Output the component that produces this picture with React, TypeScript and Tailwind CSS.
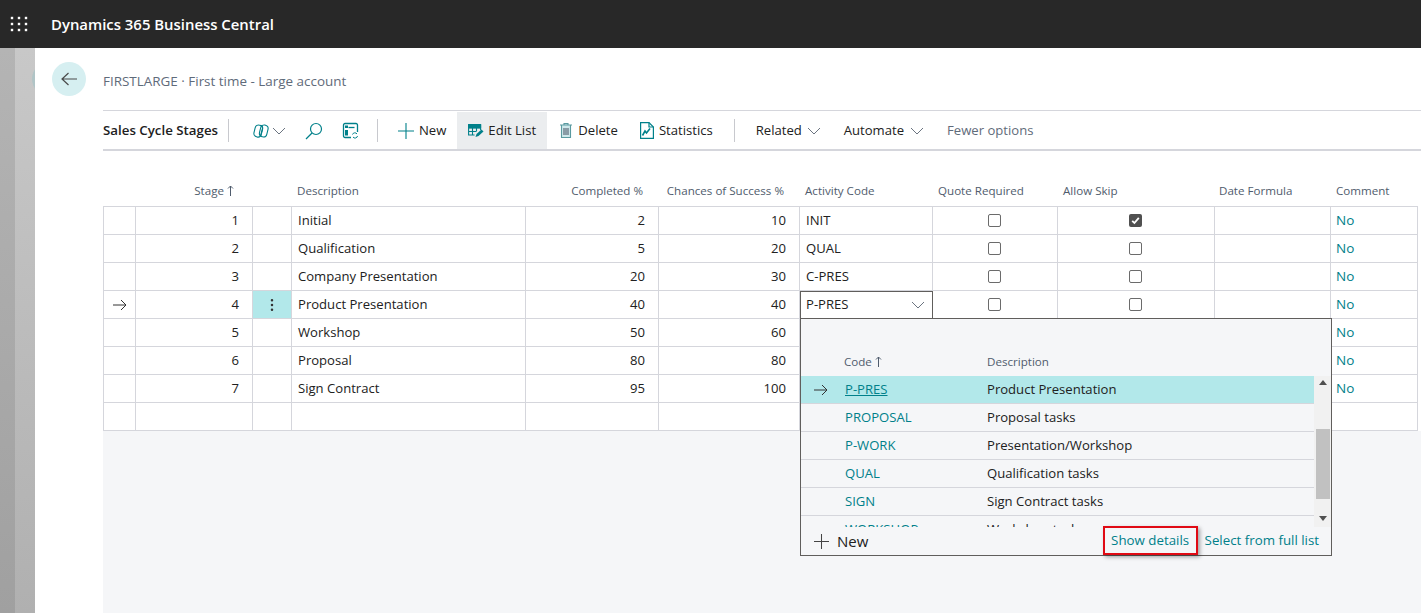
import React from 'react';
import { EllipsisVertical } from 'lucide-react';

const font = "font-['Open_Sans','Noto_Sans',sans-serif]";

const columns =
  'grid grid-cols-[32px_117px_39px_234px_133px_141px_133px_125px_157px_116px_87px]';

const stages = [
  { no: 1, desc: 'Initial', done: 2, chance: 10, code: 'INIT', skip: true },
  { no: 2, desc: 'Qualification', done: 5, chance: 20, code: 'QUAL' },
  { no: 3, desc: 'Company Presentation', done: 20, chance: 30, code: 'C-PRES' },
  { no: 4, desc: 'Product Presentation', done: 40, chance: 40, code: 'P-PRES', current: true },
  { no: 5, desc: 'Workshop', done: 50, chance: 60, code: '' },
  { no: 6, desc: 'Proposal', done: 80, chance: 80, code: '' },
  { no: 7, desc: 'Sign Contract', done: 95, chance: 100, code: '' },
];

const activities = [
  { code: 'P-PRES', desc: 'Product Presentation', current: true },
  { code: 'PROPOSAL', desc: 'Proposal tasks' },
  { code: 'P-WORK', desc: 'Presentation/Workshop' },
  { code: 'QUAL', desc: 'Qualification tasks' },
  { code: 'SIGN', desc: 'Sign Contract tasks' },
  { code: 'WORKSHOP', desc: 'Workshop tasks' },
];

const Cell: React.FC<{ className?: string; children?: React.ReactNode }> = ({ className = '', children }) => (
  <div className={`h-[28px] border-r border-b border-[#d5d6dc] bg-white flex items-center ${className}`}>
    {children}
  </div>
);

const CheckBox: React.FC<{ checked?: boolean }> = ({ checked }) =>
  checked ? (
    <span className="w-[13px] h-[13px] rounded-[2px] bg-[#505050] flex items-center justify-center">
      <svg width="9" height="9" viewBox="0 0 9 9" fill="none" stroke="#fff" strokeWidth="1.8">
        <path d="M1.2 4.8 3.4 7 7.8 1.8" />
      </svg>
    </span>
  ) : (
    <span className="w-[13px] h-[13px] rounded-[2px] border border-[#6b6b6b] bg-white" />
  );

const Chevron: React.FC<{ className?: string }> = ({ className = '' }) => (
  <svg width="14" height="8" viewBox="0 0 14 8" fill="none" stroke="#6b7480" strokeWidth="1" className={className}>
    <path d="M1 1l6 6 6-6" />
  </svg>
);

const PlusIcon: React.FC<{ size: number; color: string; className?: string }> = ({ size, color, className = '' }) => (
  <svg width={size} height={size} viewBox="0 0 16 16" fill="none" stroke={color} strokeWidth="1.1" className={className}>
    <path d="M8 0v16M0 8h16" />
  </svg>
);

const ArrowRightIcon: React.FC = () => (
  <svg width="14" height="12" viewBox="0 0 14 12" fill="none" stroke="#333" strokeWidth="1">
    <path d="M0 6h13M8 1l5 5-5 5" />
  </svg>
);

const SortUp: React.FC = () => (
  <svg width="7" height="11" viewBox="0 0 7 11" fill="none" stroke="#505c6d" strokeWidth="1" className="ml-[3px]">
    <path d="M3.500 11V1M1 3.500l2.500-2.500L6 3.500" />
  </svg>
);

const Divider: React.FC<{ className?: string }> = ({ className = '' }) => (
  <span className={`w-px h-[23px] shrink-0 bg-[#c8c9ce] ${className}`} />
);

const Toolbar: React.FC = () => (
  <div className="h-[41px] shrink-0 pt-[1px] border-t border-b-2 border-[#d5d6dc] flex items-center text-[13.1px] text-[#212121] whitespace-nowrap">
    <span className="font-semibold text-[13.3px] w-[125px]">Sales Cycle Stages</span>
    <Divider />
    <svg width="18" height="16" viewBox="0 0 18 16" fill="none" stroke="#00808a" strokeWidth="1.1" className="ml-[23px]">
      <rect x="2.500" y="2" width="7.500" height="12" rx="3.500" transform="rotate(14 6 8)" />
      <rect x="8" y="2" width="7.500" height="12" rx="3.500" transform="rotate(14 12 8)" />
      <path d="M8 2.500c2 0 3 1 2.500 3L8.500 13" />
    </svg>
    <Chevron className="ml-[2px]" />
    <svg width="18" height="18" viewBox="0 0 18 18" fill="none" stroke="#00808a" strokeWidth="1.2" className="ml-[19px]">
      <circle cx="11" cy="7" r="5.500" />
      <path d="M7 11 1 17" />
    </svg>
    <svg width="17" height="17" viewBox="0 0 17 17" fill="none" stroke="#00808a" strokeWidth="1.300" className="ml-[19px]">
      <path d="M9 15.500H3a1.500 1.500 0 0 1-1.500-1.500V3A1.500 1.500 0 0 1 3 1.500h11A1.500 1.500 0 0 1 15.500 3v7" />
      <path d="M6.500 5.500h6" />
      <rect x="3" y="3.500" width="3" height="2.500" fill="#00808a" stroke="none" />
      <rect x="3" y="8" width="3" height="5.500" fill="#00808a" stroke="none" />
      <path d="M10.500 12.500a2.500 2.500 0 0 1 4.500-.5M15.500 14a2.500 2.500 0 0 1-4.500 1" strokeWidth="1" />
    </svg>
    <Divider className="ml-[18px]" />
    <PlusIcon size={16} color="#00808a" className="ml-[20px]" />
    <span className="ml-[5px]">New</span>
    <div className="ml-[11px] h-full w-[90px] shrink-0 bg-[#ebedef] flex items-center pl-[11px]">
      <svg width="16" height="14" viewBox="0 0 16 14" fill="none" stroke="#00808a" strokeWidth="1.100">
        <path d="M.6 1h12v5M.6 1v10h6M.6 4h12M.6 7.500h8M4.500 1v10M8.500 1v6" />
        <path d="M.6.6h12v3H.6z" fill="#00808a" />
        <path d="M7.500 13l1-3 5-4.500 2 2-5 4.500z" fill="#00808a" stroke="none" />
      </svg>
      <span className="ml-[4px]">Edit List</span>
    </div>
    <svg width="14" height="17" viewBox="0 0 14 17" fill="none" stroke="#5a9aa0" strokeWidth="1.100" className="ml-[12px]">
      <path d="M1 3h12M5 3V1.500h4V3M2.500 3v12.500h9V3" fill="#cfe9ec" />
      <path d="M5 6v7M7 6v7M9 6v7" stroke="#505c6d" />
    </svg>
    <span className="ml-[5px]">Delete</span>
    <svg width="14" height="17" viewBox="0 0 14 17" fill="none" stroke="#00808a" strokeWidth="1.200" className="ml-[22px]">
      <path d="M.6 16.400V.6h8.400l4.400 4.400v11.400z" />
      <path d="M9 .6V5h4.400" />
      <path d="M2.500 13.500 5 9l1.500 2L10 6.500" strokeWidth="1.600" />
    </svg>
    <span className="ml-[5px]">Statistics</span>
    <Divider className="ml-[21px]" />
    <span className="ml-[21px]">Related</span>
    <Chevron className="ml-[5px]" />
    <span className="ml-[23px]">Automate</span>
    <Chevron className="ml-[6px]" />
    <span className="ml-[23px] text-[#5f6b7a]">Fewer options</span>
  </div>
);

const LookupPopup: React.FC = () => (
  <div className="absolute left-[697px] top-[167px] w-[532px] h-[238px] border border-[#605e5c] bg-[#f5f6f8] flex flex-col z-10 text-[13.1px]">
    <div className="h-[57px] shrink-0 flex items-end pb-[6px] text-[11.6px] text-[#505c6d]">
      <span className="ml-[43px] w-[143px] flex items-center">
        Code
        <SortUp />
      </span>
      <span>Description</span>
    </div>
    <div className="h-[151px] shrink-0 flex overflow-hidden">
      <div className="w-[513px] shrink-0">
        {activities.map((a) => (
          <div
            key={a.code}
            className={`h-[28px] flex items-center border-b border-[#d5d6dc] ${a.current ? 'bg-[#b2e8ea]' : ''}`}
          >
            <span className="w-[44px] pl-[13px] flex">
              {a.current && <ArrowRightIcon />}
            </span>
            <span className={`w-[142px] text-[#00808a] ${a.current ? 'underline' : ''}`}>{a.code}</span>
            <span className="text-[#212121]">{a.desc}</span>
          </div>
        ))}
      </div>
      <div className="w-[17px] bg-[#f1f1f1] flex flex-col items-center">
        <span className="mt-[4px] w-0 h-0 border-x-[4px] border-x-transparent border-b-[5px] border-b-[#505050]" />
        <span className="mt-[44px] w-[14px] h-[70px] bg-[#c1c1c1]" />
        <span className="mt-auto mb-[6px] w-0 h-0 border-x-[4px] border-x-transparent border-t-[5px] border-t-[#505050]" />
      </div>
    </div>
    <div className="flex-1 flex items-center pl-[13px] text-[#00808a]">
      <PlusIcon size={15} color="#444" />
      <span className="ml-[8px] text-[#212121] text-[15px]">New</span>
      <span className="ml-auto h-[29px] -mt-[1px] w-[95px] border-2 border-[#e00a14] shadow-[2px_2px_4px_rgba(0,0,0,0.35)] flex items-center justify-center text-[13.3px] whitespace-nowrap">
        Show details
      </span>
      <span className="ml-[7px] mr-[12px] text-[13.3px] whitespace-nowrap">Select from full list</span>
    </div>
  </div>
);

export default function App() {
  return (
    <div className={`h-screen overflow-hidden flex flex-col bg-white ${font}`}>
      <header className="h-[48px] shrink-0 bg-[#282828] flex items-center text-white">
        <svg width="18" height="16" viewBox="0 0 18 16" fill="#fff" className="ml-[10px]">
          {[2, 8, 14].map((y) =>
            [2, 9, 16].map((x) => <rect key={`${x}-${y}`} x={x - 1.2} y={y - 1.2} width="2.400" height="2.400" />)
          )}
        </svg>
        <span className="ml-[23px] text-[14.9px] font-semibold whitespace-nowrap">Dynamics 365 Business Central</span>
      </header>

      <div className="flex-1 flex min-h-0">
        <div className="w-[15px] shrink-0 bg-gradient-to-b from-[#b4b4b4] to-[#a0a0a0]" />
        <div className="relative w-[20px] shrink-0 overflow-hidden bg-gradient-to-b from-[#c8c8c8] to-[#b0b0b0]">
          <span className="absolute left-[17px] top-[14px] w-[34px] h-[34px] rounded-full bg-[#b0c4c6]" />
        </div>

        <main className="flex-1 min-w-0 bg-white flex">
          <div className="w-[68px] shrink-0 pt-[14px] pl-[17px]">
            <div className="w-[34px] h-[34px] rounded-full bg-[#d6eff1] flex items-center justify-center">
              <svg width="16" height="14" viewBox="0 0 16 14" fill="none" stroke="#4a4a4a" strokeWidth="1.200">
                <path d="M16 7H1M7.500 1 1 7l6.500 6" />
              </svg>
            </div>
          </div>

          <div className="flex-1 min-w-0 flex flex-col">
            <div className="h-[62px] shrink-0 pt-[24px] text-[13.45px] leading-[18px] text-[#5f6b7a] whitespace-nowrap">
              FIRSTLARGE · First time - Large account
            </div>
            <Toolbar />

            <div className="relative flex-1 flex flex-col min-h-0">
              <div className={`${columns} h-[55px] shrink-0 items-end pb-[7px] text-[11.6px] text-[#505c6d] whitespace-nowrap`}>
                <span />
                <span className="flex justify-end items-center pr-[18px]">
                  Stage
                  <SortUp />
                </span>
                <span />
                <span className="pl-[6px]">Description</span>
                <span className="text-right pr-[15px]">Completed %</span>
                <span className="text-right pr-[15px]">Chances of Success %</span>
                <span className="pl-[6px]">Activity Code</span>
                <span className="pl-[6px]">Quote Required</span>
                <span className="pl-[6px]">Allow Skip</span>
                <span className="pl-[5px]">Date Formula</span>
                <span className="pl-[6px]">Comment</span>
              </div>

              <div className="border-l border-t border-[#d5d6dc] w-[1315px] text-[13.1px] text-[#212121]">
                {stages.map((s) => (
                  <div key={s.no} className={columns}>
                    <Cell className="justify-center">{s.current && <ArrowRightIcon />}</Cell>
                    <Cell className="justify-end pr-[13px]">{s.no}</Cell>
                    <Cell className={`justify-center ${s.current ? '!bg-[#b2e8ea]' : ''}`}>
                      {s.current && <EllipsisVertical size={16} strokeWidth={1.800} color="#333" />}
                    </Cell>
                    <Cell className="pl-[6px] whitespace-nowrap">{s.desc}</Cell>
                    <Cell className="justify-end pr-[13px]">{s.done}</Cell>
                    <Cell className="justify-end pr-[13px]">{s.chance}</Cell>
                    {s.current ? (
                      <div className="h-[28px] bg-white border border-[#605e5c] flex items-center justify-between pl-[5px] pr-[7px]">
                        {s.code}
                        <Chevron />
                      </div>
                    ) : (
                      <Cell className="pl-[6px]">{s.code}</Cell>
                    )}
                    <Cell className="justify-center pr-[2px]">
                      <CheckBox />
                    </Cell>
                    <Cell className="justify-center pr-[2px]">
                      <CheckBox checked={s.skip} />
                    </Cell>
                    <Cell />
                    <Cell className="pl-[5px] text-[#00808a] text-[13.5px]">No</Cell>
                  </div>
                ))}
                <div className={columns}>
                  {Array.from({ length: 11 }).map((_, i) => (
                    <Cell key={i} />
                  ))}
                </div>
              </div>

              <div className="flex-1 bg-[#f5f6f8]" />
              <LookupPopup />
            </div>
          </div>
        </main>
      </div>
    </div>
  );
}
